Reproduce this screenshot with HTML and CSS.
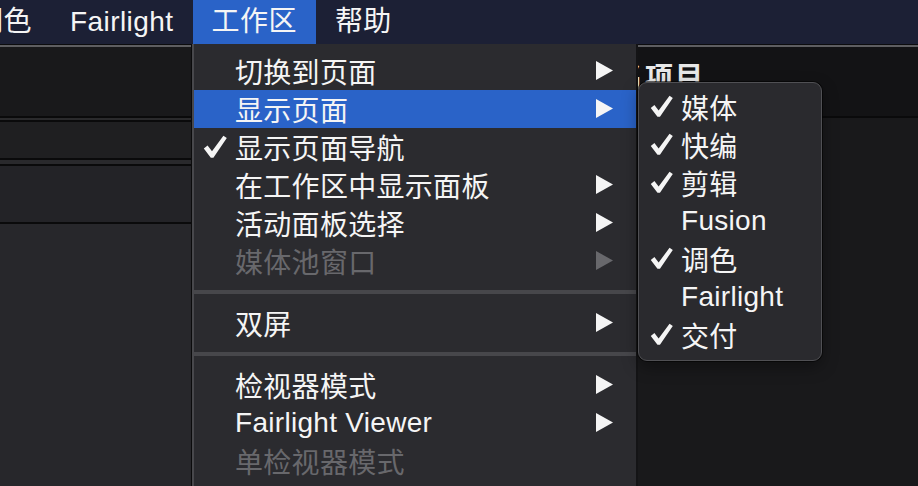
FILE: index.html
```html
<!DOCTYPE html>
<html lang="zh-CN">
<head>
  <meta charset="UTF-8" />
  <title>工作区菜单</title>
  <link rel="stylesheet" href="styles.css">
</head>
<body>
  <div class="screen">
    <nav class="menubar">
      <span class="menu-title">调色</span>
      <span class="menu-title">Fairlight</span>
      <span class="menu-title active">工作区</span>
      <span class="menu-title">帮助</span>
    </nav>

    <div class="app">
      <div class="app-edge"></div>
      <div class="app-body">
        <aside class="side">
          <div class="band band-top"></div>
          <div class="band band-thin"></div>
          <div class="band band-mid"></div>
          <div class="band band-gap"></div>
          <div class="band band-tall"></div>
          <div class="band band-rest"></div>
        </aside>
        <main class="main">
          <div class="title-bar"><span class="project">未命名项目</span></div>
          <div class="viewer"></div>
        </main>
      </div>
    </div>

    <div class="dropdown">
      <div class="item"><span class="check"></span><span class="label">切换到页面</span><svg class="arrow" viewBox="0 0 17 19"><polygon points="0,0 17,9.5 0,19"/></svg></div>
      <div class="item selected"><span class="check"></span><span class="label">显示页面</span><svg class="arrow" viewBox="0 0 17 19"><polygon points="0,0 17,9.5 0,19"/></svg></div>
      <div class="item"><svg class="check" viewBox="0 0 24 24"><path d="M0.8 13.6 L4.6 10.4 L9 16.2 L20.4 0.8 L23.8 3 L10.4 22.8 L7.8 22.8 Z"/></svg><span class="label">显示页面导航</span></div>
      <div class="item"><span class="check"></span><span class="label">在工作区中显示面板</span><svg class="arrow" viewBox="0 0 17 19"><polygon points="0,0 17,9.5 0,19"/></svg></div>
      <div class="item"><span class="check"></span><span class="label">活动面板选择</span><svg class="arrow" viewBox="0 0 17 19"><polygon points="0,0 17,9.5 0,19"/></svg></div>
      <div class="item disabled"><span class="check"></span><span class="label">媒体池窗口</span><svg class="arrow" viewBox="0 0 17 19"><polygon points="0,0 17,9.5 0,19"/></svg></div>
      <div class="separator"></div>
      <div class="item"><span class="check"></span><span class="label">双屏</span><svg class="arrow" viewBox="0 0 17 19"><polygon points="0,0 17,9.5 0,19"/></svg></div>
      <div class="separator"></div>
      <div class="item"><span class="check"></span><span class="label">检视器模式</span><svg class="arrow" viewBox="0 0 17 19"><polygon points="0,0 17,9.5 0,19"/></svg></div>
      <div class="item"><span class="check"></span><span class="label">Fairlight Viewer</span><svg class="arrow" viewBox="0 0 17 19"><polygon points="0,0 17,9.5 0,19"/></svg></div>
      <div class="item disabled"><span class="check"></span><span class="label">单检视器模式</span></div>
    </div>

    <div class="submenu">
      <div class="item"><svg class="check" viewBox="0 0 24 24"><path d="M0.8 13.6 L4.6 10.4 L9 16.2 L20.4 0.8 L23.8 3 L10.4 22.8 L7.8 22.8 Z"/></svg><span class="label">媒体</span></div>
      <div class="item"><svg class="check" viewBox="0 0 24 24"><path d="M0.8 13.6 L4.6 10.4 L9 16.2 L20.4 0.8 L23.8 3 L10.4 22.8 L7.8 22.8 Z"/></svg><span class="label">快编</span></div>
      <div class="item"><svg class="check" viewBox="0 0 24 24"><path d="M0.8 13.6 L4.6 10.4 L9 16.2 L20.4 0.8 L23.8 3 L10.4 22.8 L7.8 22.8 Z"/></svg><span class="label">剪辑</span></div>
      <div class="item"><span class="check"></span><span class="label">Fusion</span></div>
      <div class="item"><svg class="check" viewBox="0 0 24 24"><path d="M0.8 13.6 L4.6 10.4 L9 16.2 L20.4 0.8 L23.8 3 L10.4 22.8 L7.8 22.8 Z"/></svg><span class="label">调色</span></div>
      <div class="item"><span class="check"></span><span class="label">Fairlight</span></div>
      <div class="item"><svg class="check" viewBox="0 0 24 24"><path d="M0.8 13.6 L4.6 10.4 L9 16.2 L20.4 0.8 L23.8 3 L10.4 22.8 L7.8 22.8 Z"/></svg><span class="label">交付</span></div>
    </div>
  </div>
</body>
</html>
```

FILE: styles.css
```css
* {
  margin: 0;
  padding: 0;
  box-sizing: border-box;
  font-family: 'Liberation Sans', 'Noto Sans CJK SC', sans-serif;
}

body {
  background: #19191b;
  color: #f5f5f5;
  overflow: hidden;
}

.screen {
  position: relative;
  width: 918px;
  height: 486px;
  overflow: hidden;
  display: flex;
  flex-direction: column;
}

/* top menu bar */
.menubar {
  display: flex;
  height: 44px;
  margin-left: -44px;
  background: #1c2035;
}

.menu-title {
  padding: 0 19px;
  font-size: 28px;
  line-height: 44px;
  letter-spacing: 0.45px;
  white-space: nowrap;
  color: #f5f5f5;
}

.menu-title.active {
  background: #2a63c8;
}

/* application behind the menu */
.app {
  flex: 1;
  display: flex;
  flex-direction: column;
}

.app-edge {
  height: 3px;
  border-top: 1px solid #0c0c0e;
  background: #5e5e61;
}

.app-body {
  flex: 1;
  display: flex;
}

.side {
  width: 192px;
  display: flex;
  flex-direction: column;
}

.band {
  border-bottom: 2px solid #0a0a0b;
}

.band-top {
  height: 71px;
  background: #19191b;
}

.band-thin {
  height: 4px;
  background: #2a2a2c;
}

.band-mid {
  height: 38px;
  background: #1f1f21;
}

.band-gap {
  height: 6px;
  background: #29292c;
}

.band-tall {
  height: 58px;
  background: #232327;
}

.band-rest {
  flex: 1;
  border-bottom: none;
  background: #27272b;
}

.main {
  flex: 1;
  display: flex;
  flex-direction: column;
}

.title-bar {
  height: 71px;
  padding: 17px 0 0 363px;
  background: #131315;
  border-bottom: 2px solid #0a0a0b;
}

.project {
  font-size: 28px;
  line-height: 28px;
  font-weight: bold;
  letter-spacing: 2px;
  white-space: nowrap;
  color: #e8e8e8;
}

.viewer {
  flex: 1;
  background: #19191b;
}

/* dropdown menus */
.dropdown {
  position: absolute;
  top: 44px;
  left: 192px;
  width: 444px;
  height: 460px;
  padding-top: 8px;
  background: #2b2b2f;
  border-left: 2px solid #48484c;
  box-shadow: -1px 0 0 #0b0b0c, 2px 0 0 #141416;
}

.item {
  display: flex;
  align-items: center;
  height: 38px;
  padding: 0 23px 1px 9px;
  font-size: 28px;
  letter-spacing: 0.3px;
  white-space: nowrap;
  color: #f5f5f5;
}

.item .check {
  width: 24px;
  height: 24px;
  margin-right: 8px;
  fill: #f5f5f5;
  flex-shrink: 0;
}

.item .label {
  flex: 1;
}

.item .arrow {
  width: 17px;
  height: 19px;
  fill: #f5f5f5;
}

.item.selected {
  background: #2a63c8;
}

.item.disabled {
  color: #68686c;
}

.item.disabled .arrow {
  fill: #68686c;
}

.separator {
  height: 4px;
  margin: 10px 0;
  background: #47474b;
}

.submenu {
  position: absolute;
  top: 82px;
  left: 638px;
  width: 184px;
  padding: 5px 0 6px;
  background: #2a2a2e;
  border: 1px solid #505054;
  border-radius: 9px;
  box-shadow: 0 0 0 1px rgba(0, 0, 0, 0.55), 0 6px 16px rgba(0, 0, 0, 0.35);
}

.submenu .item {
  padding: 0 10px 1px 11px;
}

.submenu .item .check {
  width: 23px;
  height: 23px;
}
```
